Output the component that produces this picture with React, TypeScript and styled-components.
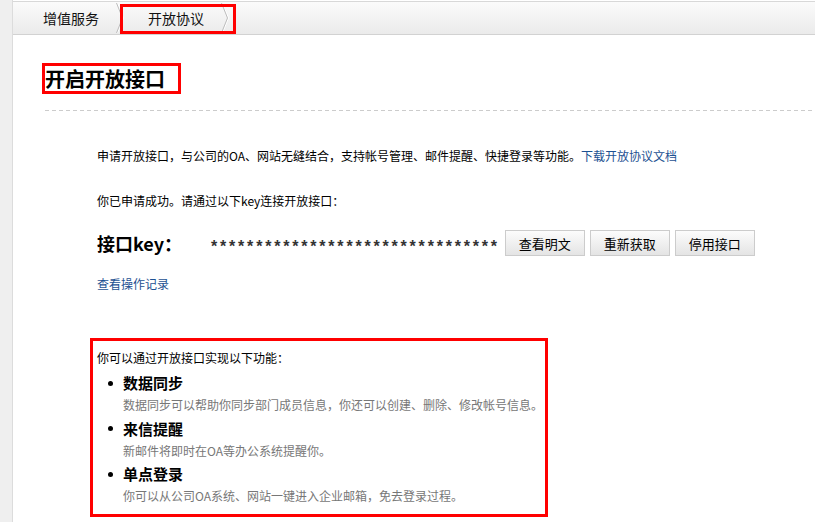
import React from "react";
import styled, { createGlobalStyle } from "styled-components";

const GlobalStyle = createGlobalStyle`
  html, body {
    margin: 0;
    padding: 0;
    background: #fff;
  }
  body {
    font-family: "Noto Sans CJK SC", "Liberation Sans", sans-serif;
    font-size: 12px;
    color: #000;
  }
`;

const Page = styled.div`
  display: flex;
  min-height: 522px;
`;

const SideStrip = styled.div`
  width: 12px;
  flex: none;
  background: #efefef;
  border-right: 1px solid #dcdcdc;
`;

const Main = styled.div`
  flex: 1;
  padding-top: 1px;
`;

const Breadcrumb = styled.div`
  display: flex;
  height: 32px;
  border-top: 1px solid #d8d8d8;
  border-bottom: 1px solid #d2d2d2;
  background: linear-gradient(#fbfbfb, #ebebeb);
  padding-left: 30px;
`;

const Crumb = styled.div<{ $active?: boolean; $first?: boolean }>`
  position: relative;
  display: flex;
  align-items: center;
  padding-left: ${(p) => (p.$first ? 0 : 23)}px;
  font-size: 14px;
  color: #111;

  ${(p) =>
    p.$active &&
    `
    &::after {
      content: "";
      position: absolute;
      left: -5px;
      right: -6px;
      top: 2px;
      bottom: 0;
      border: 3px solid #ff0000;
    }
  `}
`;

const CrumbLabel = styled.span`
  padding-right: 17px;
  line-height: 32px;
`;

const Chevron = () => (
  <svg width="9" height="32" viewBox="0 0 9 32">
    <polyline points="1.5,1 7.5,16 1.5,31" fill="none" stroke="#ffffff" strokeWidth="1" />
    <polyline points="0.5,1 6.5,16 0.5,31" fill="none" stroke="#bdbdbd" strokeWidth="1" />
  </svg>
);

const Header = styled.div`
  padding: 31px 0 0 32px;
`;

const Title = styled.h1`
  display: inline-block;
  margin: 0;
  padding-right: 13px;
  font-family: "Noto Sans CJK SC", sans-serif;
  font-size: 20px;
  font-weight: 700;
  line-height: 25px;
  outline: 3px solid #ff0000;
`;

const Dashed = styled.div`
  height: 1px;
  margin-top: 19px;
  background: repeating-linear-gradient(90deg, #cccccc 0 4px, transparent 4px 7px);
`;

const Body = styled.div`
  padding: 36px 0 0 84px;
`;

const Text = styled.p<{ $gap?: number }>`
  margin: 0 0 ${(p) => p.$gap ?? 0}px;
  line-height: 18px;
  font-size: 12px;
`;

const Link = styled.a`
  color: #1d5192;
  text-decoration: none;
  cursor: pointer;
`;

const KeyRow = styled.div`
  display: flex;
  align-items: center;
  height: 26px;
  margin-top: 20px;
`;

const KeyLabel = styled.span`
  width: 114px;
  font-size: 18px;
  font-weight: 700;
  line-height: 26px;
`;

const Stars = styled.span`
  font-family: "Liberation Sans", sans-serif;
  font-size: 16px;
  font-weight: 700;
  letter-spacing: 2.8px;
  line-height: 16px;
  padding-top: 7px;
  margin-right: 5px;
  color: #333;
`;

const ButtonGroup = styled.div`
  display: flex;
  gap: 5px;
`;

const Button = styled.button`
  width: 80px;
  height: 26px;
  padding: 0;
  border: 1px solid #cccccc;
  background: linear-gradient(#fcfcfc, #e4e4e4);
  font-family: "Noto Sans CJK SC", sans-serif;
  font-size: 13px;
  color: #000;
  cursor: pointer;
`;

const HistoryLink = styled(Link)`
  display: block;
  margin-top: 19px;
  line-height: 18px;
`;

const FeatureBox = styled.div`
  width: 448px;
  margin: 48px 0 0 -4px;
  padding: 8px 0 5px 4px;
  outline: 3px solid #ff0000;
`;

const Feature = styled.div`
  margin-bottom: 1.5px;
`;

const FeatureHead = styled.div`
  display: flex;
  align-items: center;
  gap: 10px;
  margin-left: 11px;
  line-height: 22px;
  font-size: 15px;
  font-weight: 700;
`;

const Dot = styled.span`
  width: 5px;
  height: 5px;
  border-radius: 50%;
  background: #000;
`;

const FeatureDesc = styled.div`
  margin-left: 26px;
  line-height: 22px;
  font-size: 12px;
  color: #777;
`;

const features = [
  { title: "数据同步", desc: "数据同步可以帮助你同步部门成员信息，你还可以创建、删除、修改帐号信息。" },
  { title: "来信提醒", desc: "新邮件将即时在OA等办公系统提醒你。" },
  { title: "单点登录", desc: "你可以从公司OA系统、网站一键进入企业邮箱，免去登录过程。" },
];

export default function App() {
  return (
    <Page>
      <GlobalStyle />
      <SideStrip />
      <Main>
        <Breadcrumb>
          <Crumb $first>
            <CrumbLabel>增值服务</CrumbLabel>
            <Chevron />
          </Crumb>
          <Crumb $active>
            <CrumbLabel>开放协议</CrumbLabel>
            <Chevron />
          </Crumb>
        </Breadcrumb>

        <Header>
          <Title>开启开放接口</Title>
          <Dashed />
        </Header>

        <Body>
          <Text $gap={27}>
            申请开放接口，与公司的OA、网站无缝结合，支持帐号管理、邮件提醒、快捷登录等功能。
            <Link>下载开放协议文档</Link>
          </Text>
          <Text>你已申请成功。请通过以下key连接开放接口：</Text>

          <KeyRow>
            <KeyLabel>接口key：</KeyLabel>
            <Stars>{"*".repeat(32)}</Stars>
            <ButtonGroup>
              <Button>查看明文</Button>
              <Button>重新获取</Button>
              <Button>停用接口</Button>
            </ButtonGroup>
          </KeyRow>

          <HistoryLink>查看操作记录</HistoryLink>

          <FeatureBox>
            <Text $gap={5}>你可以通过开放接口实现以下功能：</Text>
            {features.map((f) => (
              <Feature key={f.title}>
                <FeatureHead>
                  <Dot />
                  {f.title}
                </FeatureHead>
                <FeatureDesc>{f.desc}</FeatureDesc>
              </Feature>
            ))}
          </FeatureBox>
        </Body>
      </Main>
    </Page>
  );
}
